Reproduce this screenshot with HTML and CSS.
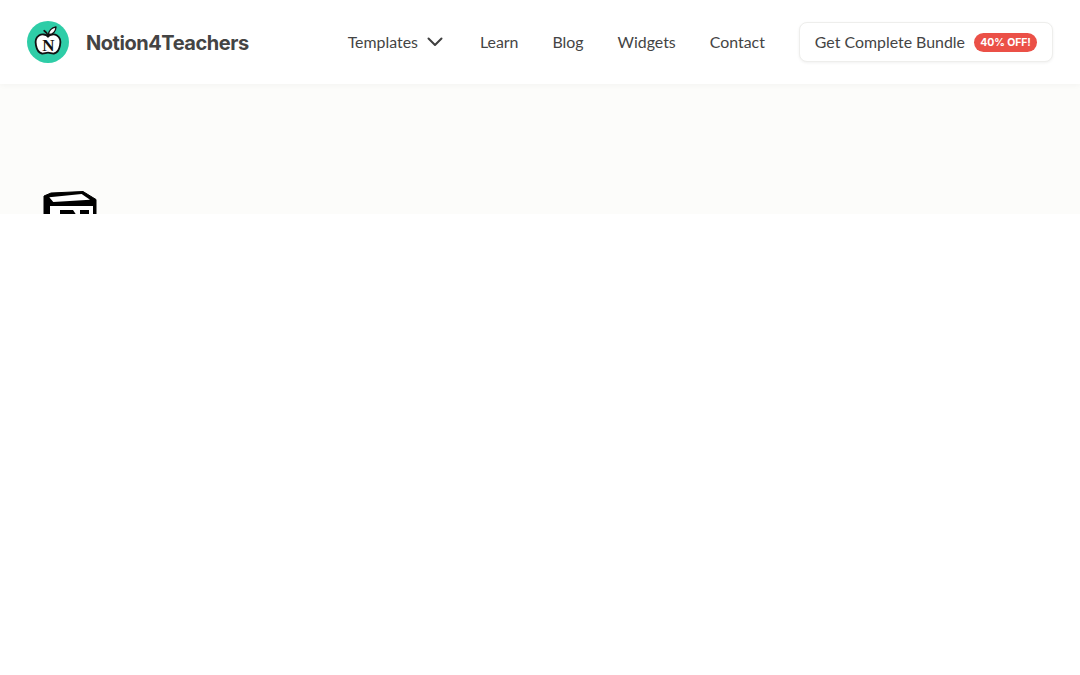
FILE: index.html
```html
<!DOCTYPE html>
<html lang="en">
<head>
<meta charset="utf-8">
<title>Notion4Teachers</title>
<link rel="stylesheet" href="styles.css">
</head>
<body>
<header class="header">
  <a class="brand" href="#">
    <svg class="brand-logo" viewBox="0 0 42 42" width="42" height="42" aria-hidden="true">
      <circle cx="21" cy="21" r="21" fill="#2ecda7"/>
      <path d="M21 15.500c-2-2-6-3-9-1-3 2-4 6-3 10 .8 4 3 7.500 6 8 2 .3 4-.8 6-.8s4 1.100 6 .8c3-.5 5.200-4 6-8 1-4 0-8-3-10-3-2-7-1-9 1z" fill="#fff" stroke="#111" stroke-width="1.800"/>
      <path d="M21 15.500c-.4-2.400-1.600-4.400-3.800-5.800" fill="none" stroke="#111" stroke-width="1.700" stroke-linecap="round"/>
      <path d="M21.500 13.500c.2-3.500 3-6.800 7.500-7.500-.2 4.300-3 7.700-7.500 7.500z" fill="#fff" stroke="#111" stroke-width="1.300" stroke-linejoin="round"/>
      <text class="brand-n" x="21.500" y="29.500" text-anchor="middle">N</text>
    </svg>
    <span class="brand-name">Notion4Teachers</span>
  </a>
  <nav class="nav">
    <a class="nav-link nav-dropdown" href="#">Templates
      <svg class="chevron" viewBox="0 0 16 10" width="16" height="10" aria-hidden="true"><path d="M1.500 1.500 8 8l6.500-6.500" fill="none" stroke="#3f3f3f" stroke-width="2" stroke-linecap="round" stroke-linejoin="round"/></svg>
    </a>
    <a class="nav-link" href="#">Learn</a>
    <a class="nav-link" href="#">Blog</a>
    <a class="nav-link" href="#">Widgets</a>
    <a class="nav-link" href="#">Contact</a>
    <a class="bundle" href="#">Get Complete Bundle <span class="badge">40% OFF!</span></a>
  </nav>
</header>
<section class="hero">
  <svg class="notion-icon" viewBox="0 0 54 54" width="54" height="54" aria-hidden="true">
    <path d="M1 5 8 2 40 .5 53 8.500V54H1z" fill="#000" stroke="#000" stroke-linejoin="round"/>
    <path d="M6.300 6.300 38.700 3 47 8.700 10.300 11z" fill="#fff"/>
    <path d="M7 15h43v39H7z" fill="#fff"/>
    <path d="M17 19h13l10 15V23h-3v-4h9v4h-3v24h-6L24 32v11h4v3H15v-3h3V23h-1z" fill="#000"/>
  </svg>
</section>
</body>
</html>
```
FILE: styles.css
```css
* { box-sizing: border-box; }
html, body { margin: 0; background: #fff; }
body { font-family: Lato, "Liberation Sans", sans-serif; color: #444; }
a { color: inherit; text-decoration: none; }

.header {
  position: relative;
  z-index: 1;
  height: 84px;
  padding: 0 27px;
  display: flex;
  align-items: center;
  justify-content: space-between;
  background: #fff;
  box-shadow: 0 1px 6px rgba(0, 0, 0, 0.04);
}
.brand { display: flex; align-items: center; gap: 17px; }
.brand-logo { display: block; }
.brand-n { font: 700 17px "Liberation Serif", serif; fill: #111; }
.brand-name { padding-top: 2px; font: 700 20px Inter, sans-serif; letter-spacing: -0.45px; color: #444; }

.nav { display: flex; align-items: center; gap: 34px; font-size: 15.900px; }
.nav-link { display: flex; align-items: center; padding-bottom: 2px; }
.nav-dropdown { gap: 9px; margin-right: 3px; }
.chevron { display: block; margin-top: 1px; }

.bundle {
  height: 40px;
  padding: 0 15px 2px;
  display: flex;
  align-items: center;
  gap: 9px;
  border: 1px solid #eeeeec;
  border-radius: 8px;
  background: #fff;
  box-shadow: 0 1px 3px rgba(0, 0, 0, 0.06);
}
.badge {
  width: 63px;
  height: 19px;
  margin-top: 2px;
  display: flex;
  align-items: center;
  justify-content: center;
  border-radius: 10px;
  background: #eb5047;
  color: #fff;
  font: 700 10.500px Inter, sans-serif;
  letter-spacing: -0.1px;
  white-space: nowrap;
}

.hero {
  height: 130px;
  padding: 107px 0 0 43px;
  overflow: hidden;
  background: #fcfcfa;
}
.notion-icon { display: block; }
```
